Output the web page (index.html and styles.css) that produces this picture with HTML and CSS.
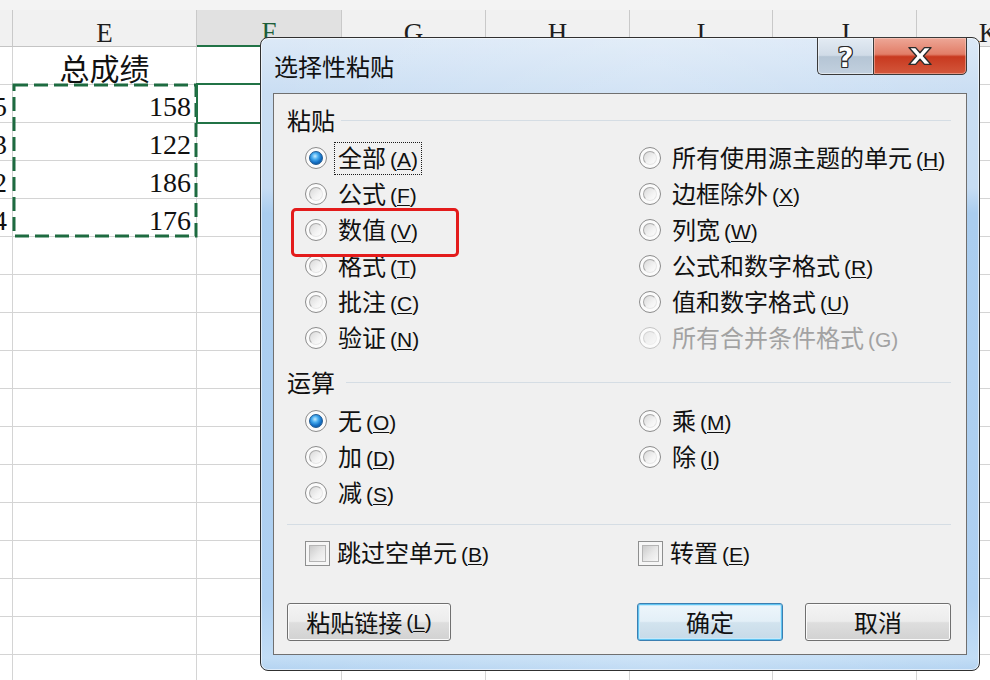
FILE: index.html
```html
<!DOCTYPE html>
<html lang="zh-CN">
<head>
<meta charset="utf-8">
<title>选择性粘贴</title>
<link rel="stylesheet" href="styles.css">
</head>
<body>
<div class="screen">
  <div class="sheet">
    <div class="topstrip"></div>
    <div class="row head">
      <div class="c"></div><div class="c">E</div><div class="c sel">F</div><div class="c">G</div><div class="c">H</div><div class="c">I</div><div class="c">J</div><div class="c">K</div>
    </div>
    <div class="row">
      <div class="c"></div><div class="c title-cell">总成绩</div><div class="c"></div><div class="c"></div><div class="c"></div><div class="c"></div><div class="c"></div><div class="c"></div>
    </div>
    <div class="row">
      <div class="c num">5</div><div class="c num">158</div><div class="c"></div><div class="c"></div><div class="c"></div><div class="c"></div><div class="c"></div><div class="c"></div>
    </div>
    <div class="row">
      <div class="c num">3</div><div class="c num">122</div><div class="c"></div><div class="c"></div><div class="c"></div><div class="c"></div><div class="c"></div><div class="c"></div>
    </div>
    <div class="row">
      <div class="c num">2</div><div class="c num">186</div><div class="c"></div><div class="c"></div><div class="c"></div><div class="c"></div><div class="c"></div><div class="c"></div>
    </div>
    <div class="row">
      <div class="c num">4</div><div class="c num">176</div><div class="c"></div><div class="c"></div><div class="c"></div><div class="c"></div><div class="c"></div><div class="c"></div>
    </div>
    <div class="row"><div class="c"></div><div class="c"></div><div class="c"></div><div class="c"></div><div class="c"></div><div class="c"></div><div class="c"></div><div class="c"></div></div>
    <div class="row"><div class="c"></div><div class="c"></div><div class="c"></div><div class="c"></div><div class="c"></div><div class="c"></div><div class="c"></div><div class="c"></div></div>
    <div class="row"><div class="c"></div><div class="c"></div><div class="c"></div><div class="c"></div><div class="c"></div><div class="c"></div><div class="c"></div><div class="c"></div></div>
    <div class="row"><div class="c"></div><div class="c"></div><div class="c"></div><div class="c"></div><div class="c"></div><div class="c"></div><div class="c"></div><div class="c"></div></div>
    <div class="row"><div class="c"></div><div class="c"></div><div class="c"></div><div class="c"></div><div class="c"></div><div class="c"></div><div class="c"></div><div class="c"></div></div>
    <div class="row"><div class="c"></div><div class="c"></div><div class="c"></div><div class="c"></div><div class="c"></div><div class="c"></div><div class="c"></div><div class="c"></div></div>
    <div class="row"><div class="c"></div><div class="c"></div><div class="c"></div><div class="c"></div><div class="c"></div><div class="c"></div><div class="c"></div><div class="c"></div></div>
    <div class="row"><div class="c"></div><div class="c"></div><div class="c"></div><div class="c"></div><div class="c"></div><div class="c"></div><div class="c"></div><div class="c"></div></div>
    <div class="row"><div class="c"></div><div class="c"></div><div class="c"></div><div class="c"></div><div class="c"></div><div class="c"></div><div class="c"></div><div class="c"></div></div>
    <div class="row"><div class="c"></div><div class="c"></div><div class="c"></div><div class="c"></div><div class="c"></div><div class="c"></div><div class="c"></div><div class="c"></div></div>
    <div class="row"><div class="c"></div><div class="c"></div><div class="c"></div><div class="c"></div><div class="c"></div><div class="c"></div><div class="c"></div><div class="c"></div></div>
    <div class="row"><div class="c"></div><div class="c"></div><div class="c"></div><div class="c"></div><div class="c"></div><div class="c"></div><div class="c"></div><div class="c"></div></div>
  </div>

  <svg class="ants" width="186" height="155" viewBox="0 0 186 155">
    <rect x="2" y="2" width="182" height="151" fill="none" stroke="#1d6b40" stroke-width="3" stroke-dasharray="14 6"/>
  </svg>
  <div class="active-cell"></div>

  <div class="dlg">
    <div class="tbar">
      <div class="title">选择性粘贴</div>
      <div class="tbtns">
        <div class="tb help"><span class="qmark">?</span></div>
        <div class="tb close">
          <svg width="28" height="20" viewBox="0 0 26 19">
            <path d="M2.5 1.5 H8.8 L13 6.4 L17.2 1.5 H23.5 L16.3 9.5 L23.5 17.5 H17.2 L13 12.6 L8.8 17.5 H2.5 L9.7 9.5 Z" fill="#ffffff" stroke="#2b2b2b" stroke-width="1.3" stroke-linejoin="round"/>
          </svg>
        </div>
      </div>
    </div>

    <div class="client">
      <div class="glabel">粘贴</div>
      <div class="opts six">
        <div class="opt"><span class="rb on"></span><span class="tx focus">全部<span class="mn">(<u>A</u>)</span></span></div>
        <div class="opt"><span class="rb"></span><span class="tx">所有使用源主题的单元<span class="mn">(<u>H</u>)</span></span></div>
        <div class="opt"><span class="rb"></span><span class="tx">公式<span class="mn">(<u>F</u>)</span></span></div>
        <div class="opt"><span class="rb"></span><span class="tx">边框除外<span class="mn">(<u>X</u>)</span></span></div>
        <div class="opt"><span class="rb"></span><span class="tx">数值<span class="mn">(<u>V</u>)</span></span></div>
        <div class="opt"><span class="rb"></span><span class="tx">列宽<span class="mn">(<u>W</u>)</span></span></div>
        <div class="opt"><span class="rb"></span><span class="tx">格式<span class="mn">(<u>T</u>)</span></span></div>
        <div class="opt"><span class="rb"></span><span class="tx">公式和数字格式<span class="mn">(<u>R</u>)</span></span></div>
        <div class="opt"><span class="rb"></span><span class="tx">批注<span class="mn">(<u>C</u>)</span></span></div>
        <div class="opt"><span class="rb"></span><span class="tx">值和数字格式<span class="mn">(<u>U</u>)</span></span></div>
        <div class="opt"><span class="rb"></span><span class="tx">验证<span class="mn">(<u>N</u>)</span></span></div>
        <div class="opt disabled"><span class="rb"></span><span class="tx">所有合并条件格式<span class="mn">(G)</span></span></div>
      </div>

      <div class="glabel op">运算</div>
      <div class="opts three">
        <div class="opt"><span class="rb on"></span><span class="tx">无<span class="mn">(<u>O</u>)</span></span></div>
        <div class="opt"><span class="rb"></span><span class="tx">乘<span class="mn">(<u>M</u>)</span></span></div>
        <div class="opt"><span class="rb"></span><span class="tx">加<span class="mn">(<u>D</u>)</span></span></div>
        <div class="opt"><span class="rb"></span><span class="tx">除<span class="mn">(<u>I</u>)</span></span></div>
        <div class="opt"><span class="rb"></span><span class="tx">减<span class="mn">(<u>S</u>)</span></span></div>
      </div>

      <div class="sep"></div>

      <div class="checks">
        <div class="chk"><span class="cb"></span><span class="ctx">跳过空单元<span class="mn">(<u>B</u>)</span></span></div>
        <div class="chk"><span class="cb"></span><span class="ctx">转置<span class="mn">(<u>E</u>)</span></span></div>
      </div>

      <div class="btns">
        <div class="btn b-link">粘贴链接<span class="mn">(<u>L</u>)</span></div>
        <div class="btn b-ok">确定</div>
        <div class="btn b-cancel">取消</div>
      </div>
    </div>
  </div>

  <div class="redmark"></div>
</div>
</body>
</html>
```

FILE: styles.css
```css
* { box-sizing: border-box; margin: 0; padding: 0; }
html, body { width: 990px; height: 680px; overflow: hidden; background: #ffffff; }
body { font-family: "Noto Sans CJK SC", "Noto Sans", sans-serif; color: #000; }

.screen { position: relative; width: 990px; height: 680px; overflow: hidden; background: #fff; }

/* ---------- spreadsheet ---------- */
.sheet { width: 1061px; }
.topstrip { height: 10px; background: #f3f3f3; }
.row {
  display: grid;
  grid-template-columns: 13px 184px 145px 144px 144px 143px 144px 144px;
  height: 38px;
}
.c {
  border-right: 1px solid #d4d4d4;
  border-bottom: 1px solid #d4d4d4;
  display: flex;
  align-items: center;
  justify-content: flex-end;
  overflow: hidden;
  white-space: nowrap;
}
.head { height: 37px; background: #f1f1f1; }
.head .c {
  border-right-color: #c9c9c9;
  border-bottom-color: #c4c4c4;
  justify-content: center;
  font-family: "Liberation Serif", serif;
  font-size: 27px;
  line-height: 26px;
  padding-top: 9px;
  color: #1e1e1e;
}
.head .c.sel { background: #e1e1e1; border-bottom: 2px solid #217346; color: #1d5e3a; }

.title-cell {
  justify-content: center;
  font-size: 30px;
  line-height: 30px;
  padding-top: 3px;
  color: #111;
}
.num {
  font-family: "Liberation Serif", serif;
  font-size: 28px;
  line-height: 28px;
  padding: 7px 5px 0 0;
  color: #111;
}

.ants { position: absolute; left: 12px; top: 83px; }
.active-cell {
  position: absolute;
  left: 196px; top: 83px;
  width: 148px; height: 41px;
  border: 2px solid #217346;
}

/* ---------- dialog ---------- */
.dlg {
  position: absolute;
  left: 260px; top: 37px;
  width: 720px; height: 634px;
  border: 1px solid #303030;
  border-radius: 8px;
  background:
    linear-gradient(90deg, rgba(255,255,255,0) 0%, rgba(255,255,255,0.18) 55%, rgba(255,255,255,0) 100%),
    linear-gradient(180deg, #dce9f7 0px, #cadef3 55px, #c6dcf3 150px, #aacdef 175px, #afd0f1 560px, #c2ddf5 620px, #b2d2f1 634px);
  box-shadow: inset 0 0 0 1px rgba(255,255,255,0.55);
  padding: 0 12px 15px 12px;
  display: flex;
  flex-direction: column;
}
.tbar { height: 55px; display: flex; align-items: flex-start; padding-left: 1px; flex: none; }
.title { font-size: 24px; line-height: 28px; margin-top: 14px; color: #111; }
.tbtns { margin-left: auto; display: flex; margin-top: -1px; height: 38px; }
.tb {
  height: 38px;
  border: 1px solid #3a3a3a;
  display: flex;
  align-items: center;
  justify-content: center;
}
.help {
  width: 56px;
  border-radius: 0 0 0 5px;
  border-right: none;
  background: linear-gradient(180deg, #e3ebf3 0%, #d0dbe7 48%, #b5c5d5 52%, #c2d0de 100%);
  box-shadow: inset 0 0 0 1px rgba(255,255,255,0.5);
}
.close {
  width: 94px;
  border-radius: 0 0 5px 0;
  background: linear-gradient(180deg, #eda797 0%, #e27d67 45%, #c8391f 52%, #d3573c 100%);
  box-shadow: inset 0 0 0 1px rgba(255,220,210,0.45);
}
.qmark {
  font-family: "DejaVu Sans", sans-serif;
  font-weight: bold;
  font-size: 27px;
  line-height: 27px;
  margin-top: 2px;
  color: #fff;
  text-shadow: 1px 0 #2b2b2b, -1px 0 #2b2b2b, 0 1px #2b2b2b, 0 -1px #2b2b2b,
               1px 1px #2b2b2b, -1px -1px #2b2b2b, 1px -1px #2b2b2b, -1px 1px #2b2b2b;
}

.client {
  flex: 1;
  background: #f0f0f0;
  border: 1px solid #707070;
  padding: 12px 15px 13px 13px;
  display: flex;
  flex-direction: column;
}
.glabel {
  display: flex;
  align-items: center;
  height: 28px;
  font-size: 24px;
  line-height: 28px;
  color: #111;
  flex: none;
}
.glabel::after {
  content: "";
  flex: 1;
  height: 1px;
  background: #d5dde4;
  margin-left: 6px;
}
.glabel.op { margin-top: 12px; }
.glabel.op::after { margin-left: 11px; }

.opts {
  display: grid;
  grid-template-columns: 334px 1fr;
  grid-auto-rows: 36px;
  margin-left: 18px;
  margin-top: 6px;
  flex: none;
}
.opts.three { margin-top: 7px; }
.opt { display: flex; align-items: center; }
.tx {
  font-size: 24px;
  line-height: 28px;
  padding: 0 3px;
  border: 1px dotted transparent;
  white-space: nowrap;
  color: #111;
}
.tx.focus { border-color: #1a1a1a; }
.mn {
  font-family: "Liberation Sans", sans-serif;
  font-size: 21px;
  margin-left: 4px;
}
.mn u { text-decoration: underline; text-underline-offset: 2px; text-decoration-thickness: 1px; }
.disabled .tx { color: #a2a2a2; }

.rb {
  position: relative;
  flex: none;
  width: 22px; height: 22px;
  margin-right: 7px;
  border-radius: 50%;
  border: 1px solid #8c8c8c;
  background: #fbfbfb;
}
.rb::after {
  content: "";
  position: absolute;
  left: 3px; top: 3px; right: 3px; bottom: 3px;
  border-radius: 50%;
  border: 1px solid #a9a9a9;
  border-right-color: #e6e6e6;
  border-bottom-color: #e6e6e6;
  background: linear-gradient(135deg, #d9d9d9 0%, #f3f3f3 60%, #fdfdfd 100%);
}
.rb.on::after {
  border: 1px solid #1f5a93;
  background: radial-gradient(circle at 42% 35%, #c8ecff 0%, #49aef0 30%, #1571c6 60%, #0a4685 100%);
}
.disabled .rb { border-color: #c4c4c4; }
.disabled .rb::after { border-color: #d4d4d4 #eeeeee #eeeeee #d4d4d4; background: linear-gradient(135deg, #e8e8e8, #f8f8f8); }

.sep { height: 1px; background: #d5dde4; margin-top: 13px; flex: none; }

.checks {
  display: grid;
  grid-template-columns: 333px 1fr;
  height: 36px;
  margin-left: 18px;
  margin-top: 10px;
  flex: none;
}
.chk { display: flex; align-items: center; }
.cb {
  position: relative;
  flex: none;
  width: 25px; height: 25px;
  margin-right: 7px;
  border: 1px solid #8e8f8f;
  background: #f6f6f6;
}
.cb::after {
  content: "";
  position: absolute;
  left: 3px; top: 3px; right: 3px; bottom: 3px;
  border: 1px solid #b4b4b4;
  background: linear-gradient(135deg, #cbcbcb 0%, #e9e9e9 55%, #f7f7f7 100%);
}
.ctx { font-size: 24px; line-height: 28px; white-space: nowrap; color: #111; }

.btns { display: flex; margin-top: 32px; height: 38px; flex: none; }
.btn {
  height: 38px;
  border: 1px solid #707070;
  border-radius: 3px;
  font-size: 24px;
  line-height: 28px;
  color: #111;
  display: flex;
  align-items: center;
  justify-content: center;
  white-space: nowrap;
  background: linear-gradient(180deg, #f4f4f4 0%, #ececec 48%, #dedede 52%, #d2d2d2 100%);
  box-shadow: inset 0 0 0 1px #fbfbfb;
}
.b-link { width: 164px; }
.b-ok {
  width: 146px;
  margin-left: auto;
  border-color: #3c7fb1;
  box-shadow: inset 0 0 0 1px #5fc3f0, inset 0 0 0 2px #c5e9fb;
  background: linear-gradient(180deg, #eef6fb 0%, #e3eff7 48%, #d2e3ee 52%, #c6dae8 100%);
}
.b-cancel { width: 146px; margin-left: 22px; }

.redmark {
  position: absolute;
  left: 291px; top: 208px;
  width: 168px; height: 49px;
  border: 3px solid #e31b1b;
  border-radius: 5px;
}
```
